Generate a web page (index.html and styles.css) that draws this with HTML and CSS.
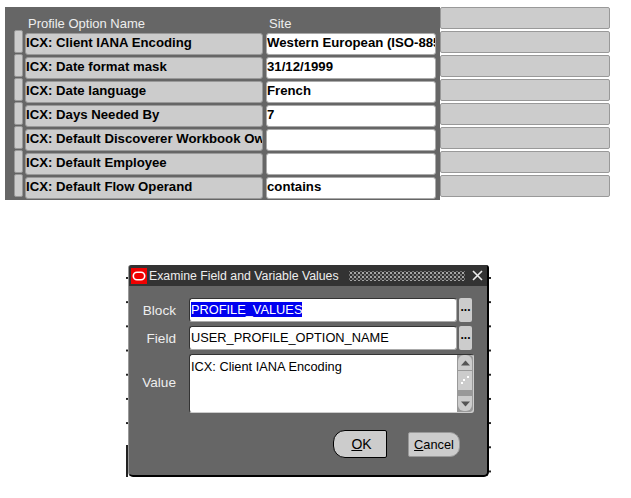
FILE: index.html
```html
<!DOCTYPE html>
<html lang="en">
<head>
<meta charset="utf-8">
<title>Examine Field and Variable Values</title>
<link rel="stylesheet" href="styles.css">
</head>
<body>
<section class="form">
  <div class="panel">
    <div class="head"><span class="head-name">Profile Option Name</span><span class="head-site">Site</span></div>
    <div class="row"><i class="ind"></i><div class="name">ICX: Client IANA Encoding</div><div class="val">Western European (ISO-8859-1)</div></div>
    <div class="row"><i class="ind"></i><div class="name">ICX: Date format mask</div><div class="val">31/12/1999</div></div>
    <div class="row"><i class="ind"></i><div class="name">ICX: Date language</div><div class="val">French</div></div>
    <div class="row"><i class="ind"></i><div class="name">ICX: Days Needed By</div><div class="val">7</div></div>
    <div class="row"><i class="ind"></i><div class="name">ICX: Default Discoverer Workbook Owner</div><div class="val"></div></div>
    <div class="row"><i class="ind"></i><div class="name">ICX: Default Employee</div><div class="val"></div></div>
    <div class="row"><i class="ind"></i><div class="name">ICX: Default Flow Operand</div><div class="val">contains</div></div>
  </div>
  <div class="side">
    <div class="cell"></div><div class="cell"></div><div class="cell"></div><div class="cell"></div>
    <div class="cell"></div><div class="cell"></div><div class="cell"></div><div class="cell"></div>
  </div>
</section>
<div class="backdrop">
  <div class="dialog">
    <div class="title">
      <svg class="logo" width="16" height="16" viewBox="0 0 16 16"><rect width="16" height="16" fill="#f00000"/><rect x="2.3" y="4.3" width="11.4" height="7.4" rx="3.7" fill="none" stroke="#fff" stroke-width="1.6"/></svg>
      <span class="title-text">Examine Field and Variable Values</span>
      <span class="grip"></span>
      <svg class="close" width="11" height="11" viewBox="0 0 11 11"><path d="M1 1L10 10M10 1L1 10" stroke="#eee" stroke-width="1.6"/></svg>
    </div>
    <div class="fields">
      <div class="field"><label class="lab">Block</label><div class="input"><mark class="sel">PROFILE_VALUES</mark></div><button class="dots">...</button></div>
      <div class="field"><label class="lab">Field</label><div class="input">USER_PROFILE_OPTION_NAME</div><button class="dots">...</button></div>
      <div class="field area-row"><label class="lab">Value</label>
        <div class="area">
          <div class="area-text">ICX: Client IANA Encoding</div>
          <div class="scroll">
            <span class="sbtn sbtn-up"><svg width="9" height="6" viewBox="0 0 9 6"><path d="M4.5 0.5L9 5.5H0Z" fill="#555"/></svg></span>
            <span class="thumb"><svg width="14" height="19" viewBox="0 0 14 19"><rect x="9" y="5" width="2" height="2" fill="#fff"/><rect x="5" y="8" width="2" height="2" fill="#fff"/><rect x="3" y="11" width="2" height="2" fill="#fff"/></svg></span>
            <span class="track"></span>
            <span class="sbtn sbtn-down"><svg width="9" height="6" viewBox="0 0 9 6"><path d="M4.5 5.5L9 0.5H0Z" fill="#555"/></svg></span>
          </div>
        </div>
      </div>
    </div>
    <div class="actions">
      <button class="btn ok"><u>O</u>K</button>
      <button class="btn cancel"><u>C</u>ancel</button>
    </div>
  </div>
</div>
</body>
</html>
```
FILE: styles.css
```css
* { box-sizing: border-box; }
html, body { margin: 0; background: #fff; }
body { width: 631px; height: 498px; overflow: hidden; font-family: "Liberation Sans", Arial, sans-serif; padding-top: 7px; }

.form { display: flex; margin-left: 5px; height: 193px; overflow: hidden; }
.panel { width: 435px; background: #666; flex: none; padding-left: 9px; }
.head { height: 24px; color: #eee; font-size: 13px; line-height: 15px; display: flex; align-items: flex-end; }
.head-name { width: 241px; padding-left: 14px; }
.head-site { margin-left: 14px; }
.row { display: flex; height: 24px; align-items: flex-start; padding-top: 2px; }
.ind { width: 9px; height: 23px; margin-top: -3px; background: #ccc; border: 1px solid #999; border-radius: 2px; flex: none; margin-right: 2px; }
.name, .val { height: 22px; font-weight: bold; font-size: 13.2px; line-height: 18px; overflow: hidden; white-space: nowrap; border-radius: 3px; color: #000; flex: none; }
.name { width: 238px; background: #ccc; border: 1px solid #999; }
.val { width: 170px; margin-left: 3px; background: #fff; border: 1px solid #aaa; }

.side { width: 170px; display: flex; flex-direction: column; gap: 2px; flex: none; }
.cell { height: 22px; flex: none; background: #ccc; border: 1px solid #999; border-radius: 2px; }

.backdrop { margin: 65px 0 0 126px; width: 365px; height: 212px; padding: 0 2px;
  background-image: linear-gradient(#222 2px, transparent 2px), linear-gradient(#222 2px, transparent 2px), linear-gradient(#222, #222);
  background-size: 2px 24.2px, 2px 24.2px, 2px 32px;
  background-repeat: repeat-y, repeat-y, no-repeat;
  background-position: 0 12px, 100% 12px, 0 100%; }
.dialog { background: #666; height: 212px; border-right: 2px solid #000; border-bottom: 2px solid #000; border-left: 1px solid #999; border-radius: 3px 3px 5px 5px; display: flex; flex-direction: column; }
.title { height: 21px; background: #333; display: flex; align-items: center; color: #eee; font-size: 12.3px; padding: 0 5px 0 2px; flex: none; border-radius: 3px 0 0 0; }
.logo { flex: none; }
.title-text { margin-left: 2px; white-space: nowrap; }
.grip { width: 116px; height: 10px; margin-left: 10px; flex: none;
  background-image: radial-gradient(circle, #aaa 0.7px, transparent 0.9px), radial-gradient(circle, #777 0.7px, transparent 0.9px);
  background-size: 4px 4px; background-position: 0 0, 2px 2px; }
.close { margin-left: 7px; flex: none; }

.fields { padding-top: 12px; display: flex; flex-direction: column; gap: 4px; }
.field { display: flex; align-items: center; height: 24px; }
.lab { width: 47px; text-align: right; color: #eee; font-size: 13.6px; flex: none; }
.input { width: 268px; height: 24px; margin-left: 13px; background: #fff; border: 1px solid #aaa; border-top-color: #333; border-left-color: #333; border-radius: 3px; font-size: 12.8px; line-height: 22px; padding-left: 1px; color: #000; white-space: nowrap; flex: none; }
.sel { background: #0000f0; color: #fff; }
.dots { width: 13px; height: 24px; margin-left: 2px; padding: 0 0 6px; background: #ccc; border: 0; border-radius: 2px; color: #000; font: bold 12px/14px "Liberation Sans", sans-serif; }
.area-row { height: 59px; }
.area-row .lab { padding-bottom: 2px; }
.area { width: 285px; height: 59px; margin-left: 13px; background: #fff; border: 1px solid #ccc; border-top-color: #333; border-left-color: #333; border-radius: 3px; display: flex; flex: none; }
.area-text { flex: 1; font-size: 12.8px; line-height: 18px; padding: 3px 0 0 1px; color: #000; white-space: nowrap; }
.scroll { width: 16px; background: #999; display: flex; flex-direction: column; gap: 1px; padding: 0 1px; flex: none; border-radius: 0 3px 3px 0; }
.sbtn { height: 15px; background: #ccc; display: flex; align-items: center; justify-content: center; flex: none; }
.sbtn-up { border-radius: 6px 6px 0 0; }
.sbtn-down { border-radius: 0 0 6px 6px; margin-bottom: 1px; }
.thumb { height: 19px; background: #ccc; flex: none; display: block; }
.thumb svg { display: block; }
.track { flex: 1; }

.actions { display: flex; justify-content: flex-end; align-items: center; margin-top: 17px; padding-right: 27px; gap: 21px; }
.btn { padding: 0; background: #ccc; color: #000; font: 12.8px "Liberation Sans", sans-serif; }
.ok { width: 54px; height: 28px; border: 1px solid #000; border-radius: 12px 2px 2px 12px; padding-left: 3px; font-size: 14px; }
.cancel { width: 52px; height: 25px; border: 1px solid #999; border-radius: 2px 10px 10px 2px; }
```
